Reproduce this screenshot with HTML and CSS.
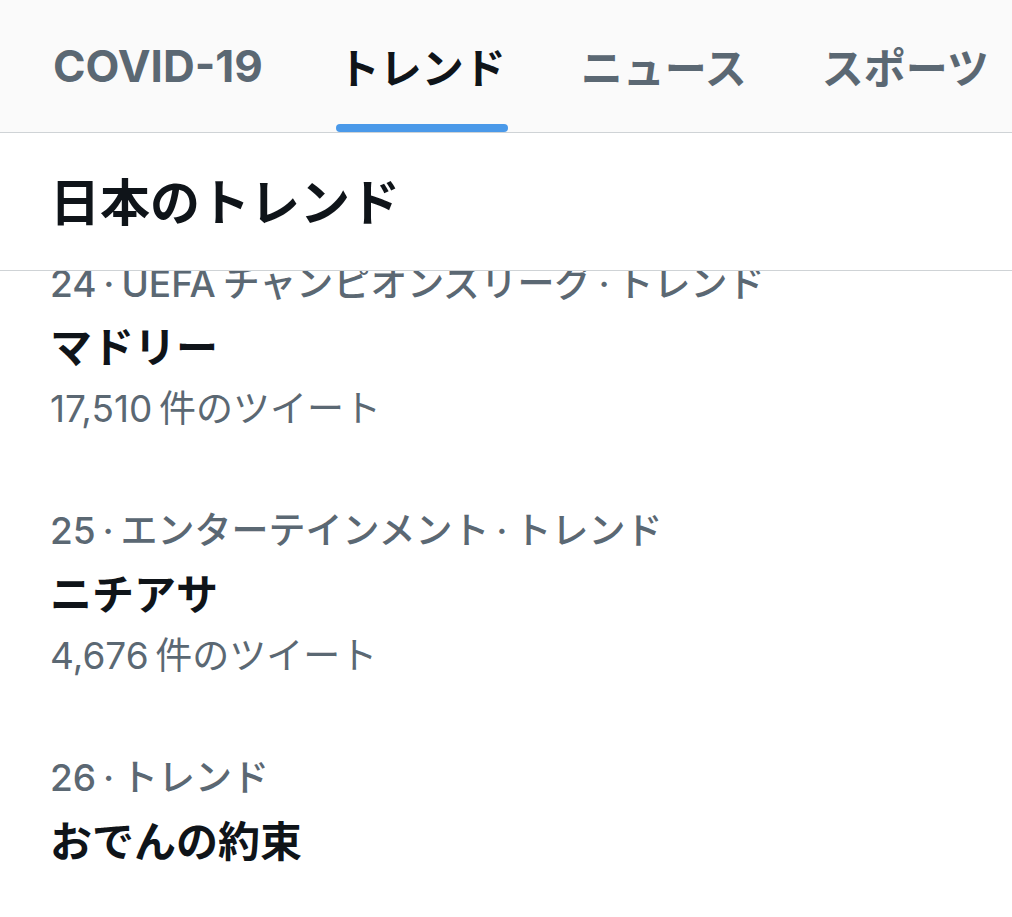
FILE: index.html
```html
<!DOCTYPE html>
<html lang="ja">
    <head>
        <meta charset="utf-8">
        <title>トレンド</title>
        <link rel="stylesheet" href="styles.css">
    </head>
    <body>
        <div class="tabs">
            <div class="tab latinTab">COVID-19</div>
            <div class="tab active">トレンド</div>
            <div class="tab">ニュース</div>
            <div class="tab">スポーツ</div>
        </div>
        <div class="sectionHead">日本のトレンド</div>
        <div class="trendList">
            <div class="trendItems">
                <div class="trend">
                    <div class="trendMeta">24 · UEFA チャンピオンズリーグ · トレンド</div>
                    <div class="trendName">マドリー</div>
                    <div class="trendCount">17,510&#8201;件のツイート</div>
                </div>
                <div class="trend">
                    <div class="trendMeta">25 · エンターテインメント · トレンド</div>
                    <div class="trendName">ニチアサ</div>
                    <div class="trendCount">4,676&#8201;件のツイート</div>
                </div>
                <div class="trend">
                    <div class="trendMeta">26 · トレンド</div>
                    <div class="trendName">おでんの約束</div>
                </div>
            </div>
        </div>
    </body>
</html>
```

FILE: styles.css
```css
body {
    margin: 0;
    background: white;
    color: #0f1419;
    font-family: "Inter", "Noto Sans CJK JP", sans-serif;
    overflow: hidden;
}
.tabs {
    display: flex;
    gap: 75px;
    height: 133px;
    padding-left: 53px;
    background: #fafafa;
    border-bottom: 1px solid #cfd3d6;
    box-sizing: border-box;
}
.tab {
    position: relative;
    display: flex;
    align-items: center;
    padding-bottom: 1px;
    font-size: 42px;
    font-weight: bold;
    color: #5b6873;
    white-space: nowrap;
}
.latinTab {
    font-size: 44px;
}
.tab.active {
    color: #0f1419;
}
.tab.active::after {
    content: "";
    position: absolute;
    left: -2px;
    right: -2px;
    bottom: 0;
    height: 8px;
    border-radius: 4px;
    background: #4a99e9;
}
.sectionHead {
    display: flex;
    align-items: center;
    height: 131px;
    padding-left: 50px;
    padding-bottom: 6px;
    font-size: 50px;
    font-weight: bold;
    border-bottom: 1px solid #cfd3d6;
}
.trendList {
    overflow: hidden;
}
.trendItems {
    margin-top: -49px;
}
.trend {
    padding: 30px 0 31px 50px;
}
.trendMeta {
    line-height: 64px;
    font-size: 37px;
    font-weight: 500;
    word-spacing: -3px;
    color: #5b6873;
}
.trendName {
    line-height: 64px;
    font-size: 42px;
    font-weight: bold;
}
.trendCount {
    line-height: 58px;
    font-size: 37px;
    color: #5b6873;
}
```
